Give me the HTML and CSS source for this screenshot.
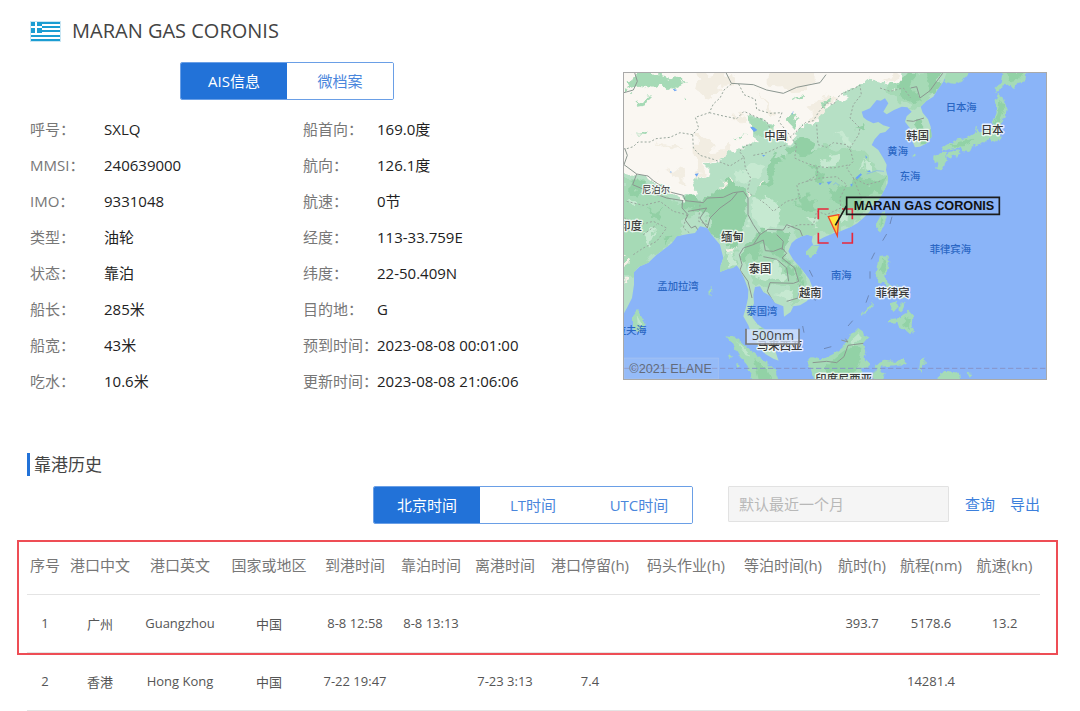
FILE: index.html
```html
<!DOCTYPE html>
<html lang="zh-CN">
<head>
<meta charset="utf-8">
<meta name="viewport" content="width=device-width, initial-scale=1">
<title>MARAN GAS CORONIS</title>
<link rel="stylesheet" href="styles.css">
</head>
<body>
<main class="page">
  <header class="ship">
    <svg class="flag" viewBox="0 0 31 21" aria-label="希腊" role="img">
      <rect width="31" height="21" fill="#c9e6f3"/>
      <rect x="1" y="1" width="29" height="19" fill="#fff"/>
      <path fill="#1b9dd2" d="M1 1h29v2H1zM12 5h18v2H12zM12 9h18v2H12zM1 14h29v2H1zM1 18h29v2H1z"/>
      <path fill="#1b9dd2" d="M1 1h11v11H1z"/>
      <path fill="#fff" d="M5 1h2v11H5zM1 5h11v2H1z"/>
    </svg>
    <h1 class="ship-name">MARAN GAS CORONIS</h1>
  </header>

  <section class="overview">
    <div class="info">
      <div class="tabs">
        <button class="tab tab-active" type="button">AIS信息</button>
        <button class="tab" type="button">微档案</button>
      </div>
      <div class="details">
        <dl class="fields">
          <dt>呼号：</dt><dd>SXLQ</dd>
          <dt>MMSI：</dt><dd>240639000</dd>
          <dt>IMO：</dt><dd>9331048</dd>
          <dt>类型：</dt><dd>油轮</dd>
          <dt>状态：</dt><dd>靠泊</dd>
          <dt>船长：</dt><dd>285米</dd>
          <dt>船宽：</dt><dd>43米</dd>
          <dt>吃水：</dt><dd>10.6米</dd>
        </dl>
        <dl class="fields">
          <dt>船首向：</dt><dd>169.0度</dd>
          <dt>航向：</dt><dd>126.1度</dd>
          <dt>航速：</dt><dd>0节</dd>
          <dt>经度：</dt><dd>113-33.759E</dd>
          <dt>纬度：</dt><dd>22-50.409N</dd>
          <dt>目的地：</dt><dd>G</dd>
          <dt>预到时间：</dt><dd>2023-08-08 00:01:00</dd>
          <dt>更新时间：</dt><dd>2023-08-08 21:06:06</dd>
        </dl>
      </div>
    </div>

    <svg class="map" viewBox="12 15 1266 918" role="img" aria-label="船舶位置">
      <defs>
        <clipPath id="land">
          <path d="M0 0H985L970 41L952 66L940 86L918 100L902 116L908 134L924 154L932 176L935 206L920 226L900 236L885 238L877 220L882 200L870 181L855 161L860 145L875 131L862 118L845 116L822 126L800 139L790 131L805 106L795 91L782 98L770 96L750 121L725 131L730 148L740 156L760 166L775 162L790 172L810 178L796 192L780 196L764 214L755 231L775 246L790 271L800 290L798 306L804 330L803 346L790 371L778 392L760 411L748 432L730 450L712 466L690 478L665 488L640 496L612 508L598 515L596 530L580 532L575 520L578 505L562 500L545 505L528 514L515 525L505 550L520 575L550 610L568 634L576 655L578 680L560 700L540 712L520 715L512 732L492 746L490 715L465 705L450 684L430 672L420 655L405 657L400 680L402 706L394 726L398 750L412 768L436 786L456 822L466 850L476 878L460 872L436 858L412 830L395 800L385 772L370 745L378 718L384 690L385 665L372 630L360 605L350 592L338 600L325 602L300 612L302 592L310 570L300 530L286 514L275 500L262 480L240 475L225 495L205 498L170 505L155 526L130 545L110 560L85 584L60 595L42 612L42 650L36 690L22 718L12 736H0Z"/>
        </clipPath>
        <filter id="terrain" x="0" y="0" width="1300" height="950" filterUnits="userSpaceOnUse">
          <feTurbulence type="fractalNoise" baseFrequency=".025" numOctaves="3" seed="4" result="noise"/>
          <feDisplacementMap in="SourceGraphic" in2="noise" scale="60" xChannelSelector="R" yChannelSelector="G"/>
        </filter>
        <filter id="coast" x="0" y="0" width="1300" height="950" filterUnits="userSpaceOnUse">
          <feTurbulence type="fractalNoise" baseFrequency=".06" numOctaves="2" seed="9" result="noise"/>
          <feDisplacementMap in="SourceGraphic" in2="noise" scale="16" xChannelSelector="R" yChannelSelector="G"/>
        </filter>
      </defs>
      <rect x="0" y="0" width="1300" height="950" fill="#8ab4f8"/>

      <!-- islands -->
      <g filter="url(#coast)">
      <g fill="#a5dbb7">
        <path d="M36 742L50 724L62 742L77 768L66 788L46 790L36 772Z"/>
        <path d="M558 548L574 532L598 534L590 556L574 568L558 560Z"/>
        <path d="M790 432L801 443L792 474L780 494L768 478L776 450Z"/>
        <path d="M975 0H1046V15L1030 34L1004 48L978 42L968 34Z"/>
        <path d="M1150 0H1220L1216 40L1196 44L1182 63L1158 47L1146 54L1138 72L1126 74L1124 62L1142 46Z"/>
        <path d="M1134 78L1146 84L1152 100L1160 122L1154 144L1142 166L1138 186L1142 206L1128 224L1116 222L1106 212L1090 226L1070 234L1058 230L1048 252L1030 250L1022 238L996 242L966 250L970 236L990 224L1012 214L1040 210L1062 196L1068 176L1082 190L1106 184L1122 160L1130 130L1124 100Z"/>
        <path d="M988 252L1012 244L1022 252L1010 266L996 260L990 272L980 264Z"/>
        <path d="M940 266L958 256L978 254L980 272L972 296L962 311L948 304L952 284L940 278Z"/>
        <path d="M776 564L800 562L808 582L802 606L796 624L798 640L822 660L812 664L790 646L774 640L766 616L772 592Z"/>
        <path d="M814 706L830 700L836 716L822 730L810 724ZM846 700L856 706L846 730L838 724ZM828 652L846 660L866 690L850 690Z"/>
        <path d="M800 768L818 752L838 750L858 738L866 728L880 744L878 776L882 790L870 798L856 786L838 780L832 762L816 764Z"/>
        <path d="M722 744L742 722L760 700L756 716L738 736Z"/>
        <path d="M268 664L275 656L273 678L269 684Z"/>
        <path d="M316 802L346 806L378 834L410 862L440 884L466 908L480 950H402L384 900L360 866L336 826Z"/>
        <path d="M562 880L580 868L604 876L640 858L672 832L690 804L714 780L728 790L732 802L748 808L730 828L736 850L730 870L752 890L728 902L722 950H590L572 912Z"/>
        <path d="M766 890L792 878L830 882L858 872L856 888L824 892L784 896L776 910L794 916L780 950H758Z"/>
        <path d="M900 880L910 868L918 882L906 896L906 918L898 904Z"/>
        <path d="M958 920L978 908L1016 914L1024 950H952ZM1040 914L1054 918L1046 926Z"/>
        <path d="M324 856L336 866L328 870ZM348 886L360 894L352 900ZM880 260L888 262L882 266Z"/>
      </g>
      <g fill="#92d2a6">
        <path d="M1138 92L1156 118L1144 150L1126 180L1096 196L1120 170L1134 134Z"/>
        <path d="M1160 15H1210L1196 34L1170 40Z"/>
        <path d="M985 232L1040 216L1064 212L1040 234L1000 236Z"/>
        <path d="M612 900L660 860L700 830L724 840L718 880L690 950H640Z"/>
        <path d="M400 870L440 900L460 950H420Z"/>
        <path d="M790 570L800 590L790 620L780 606ZM858 746L872 752L870 786L850 770ZM784 446L790 460L780 484Z"/>
      </g>
      <g fill="#bfe6cb">
        <path d="M50 740L66 770L54 776ZM350 818L396 866L380 862ZM690 820L716 796L722 810L700 838Z"/>
      </g>
      </g>

      <g clip-path="url(#land)">
        <rect x="0" y="0" width="1300" height="950" fill="#b6e0c5"/>
        <g filter="url(#terrain)">
        <!-- forest tones -->
        <g fill="#a6dab6">
          <path d="M500 260L560 230L640 250L700 236L740 280L790 300L800 360L740 440L640 500L540 500L500 470L420 440L400 380L440 330L470 290Z"/>
          <path d="M0 330L80 360L160 400L240 410L200 450L170 520L100 560L40 620L0 620Z"/>
          <path d="M380 560L440 530L500 560L560 640L570 700L520 720L500 650L440 670L400 650Z"/>
          <path d="M800 20L960 10L940 80L900 110L870 130L840 110L800 70Z"/>
          <path d="M300 560L330 520L350 580L330 610L300 612Z"/>
        </g>
        <g fill="#92d0a5">
          <path d="M180 396L250 398L290 362L310 336L360 352L378 372L380 440L372 500L340 540L310 510L270 500L262 440L200 420Z"/>
          <path d="M430 350L450 300L472 258L482 270L474 310L450 346Z"/>
          <path d="M440 485L500 490L510 530L490 560L530 610L552 650L520 620L480 570L420 540L380 590L360 570L390 520Z"/>
          <path d="M500 240L540 210L590 240L560 258L510 262Z"/>
          <path d="M620 370L690 350L720 330L750 340L790 330L780 370L730 390L700 430L650 410Z"/>
          <path d="M840 20L872 14L880 60L900 90L860 110L840 80ZM920 20L970 12L950 60L930 70Z"/>
          <path d="M890 160L920 180L930 210L915 224L900 190Z"/>
          <path d="M560 300L600 310L620 340L580 335ZM520 395L580 390L600 420L550 430ZM690 180L730 165L720 190Z"/>
          <path d="M20 345L70 360L60 376L24 372ZM70 420L130 430L110 446ZM130 500L160 490L140 526Z"/>
          <path d="M400 770L430 790L450 830L430 820Z"/>
        </g>
        <g fill="#c6e9d1">
          <path d="M392 400L440 380L480 420L470 470L430 490L395 460Z"/>
          <path d="M360 300L400 290L430 310L390 350L350 330Z"/>
          <path d="M600 270L660 262L650 290L610 296ZM640 200L700 210L680 230ZM720 290L760 286L750 310ZM650 440L700 440L670 462ZM560 450L600 450L590 474ZM410 590L470 575L500 630L450 640L420 630Z"/>
          <path d="M320 550L334 540L344 580L328 596ZM20 400L60 396L50 420ZM60 500L110 490L90 530ZM460 680L520 676L510 700Z"/>
        </g>
        <!-- plateau and steppe -->
        <path fill="#faf7f2" d="M-60 -60H850L846 34L820 62L790 40L762 32L740 52L700 62L676 80L640 108L606 112L590 135L596 158L560 178L542 176L532 198L510 222L496 210L476 222L462 200L452 168L420 150L384 128L380 158L392 182L404 214L380 232L352 246L318 242L300 256L302 284L266 292L264 316L240 332L226 366L204 396L170 378L120 352L66 332L40 322L18 314L-60 300Z"/>
        <g fill="#f2ede2">
          <path d="M220 20L330 12L338 44L300 66L250 100L240 50Z"/>
          <path d="M440 -20L600 -20L600 18L560 60L500 72L440 56Z"/>
          <path d="M220 180L270 240L340 236L290 280L260 290L240 340L230 280Z"/>
          <path d="M100 220L200 240L170 248ZM70 20L130 18L120 40L80 36ZM410 70L450 110L480 140L450 132ZM560 110L620 80L650 90L600 130L570 170ZM780 30L840 20L820 50Z"/>
          <path d="M120 300L190 320L210 350L160 330ZM330 130L372 150L360 170Z"/>
        </g>
        <g fill="#a6dab6">
          <path d="M44 22L140 18L200 44L160 66L130 52L100 60L60 50L20 62L14 40L40 36Z"/>
          <path d="M40 94L84 82L76 100L52 104ZM14 70L34 76L22 84ZM42 196L96 186L80 198ZM500 160L516 136L530 152L516 178ZM530 88L550 92L540 104ZM180 86L196 92L184 96ZM600 104L636 84L620 110ZM352 206L366 210L358 216Z"/>
          <path d="M378 132L420 156L450 172L440 200L404 196L388 170Z"/>
        </g>
        <g fill="#f4f0e6">
          <path d="M296 334L316 352L300 354ZM330 340L350 350L336 356ZM12 560L24 566L22 592L12 600ZM14 630L26 640L18 664ZM380 366L400 380L390 388ZM430 330L438 346L428 348ZM320 530L340 536L332 556Z"/>
        </g>
        </g>
        <!-- lakes -->
        <g fill="#69a3f5">
          <path d="M390 176L402 178L412 186L402 192ZM158 62L172 66L164 70ZM224 318L236 316L230 326ZM706 330L722 316L726 320L712 334ZM620 342L636 340L626 350ZM740 312L750 306L752 312ZM736 262L742 268L738 272ZM596 346L606 344L600 352ZM426 260L436 262L430 266ZM150 310L156 312L152 314ZM690 350L698 346L696 356Z"/>
        </g>
        <g fill="none" stroke="#7fb0f3" stroke-width="2">
          <path d="M740 318L770 308L792 310M640 350L648 344L656 352M516 140L520 130"/>
        </g>
        <!-- provincial borders -->
        <g class="province">
          <path d="M334 48L312 66L300 90L280 108L268 134L226 148L236 180L218 200L180 194L150 208L108 212L90 222L54 222L40 236L14 244"/>
          <path d="M268 134L310 144L350 152L372 130L402 144L440 160L452 186M218 200L220 240L240 262L280 274L330 294L372 268L358 250L378 232L400 230"/>
          <path d="M356 48L372 80L406 94L410 124L450 136L486 134L476 160L500 190L512 206L540 180L556 164L580 158L596 132L620 104"/>
          <path d="M372 268L376 300L392 330L382 370L398 384M400 262L440 254L480 236L500 230M510 206L530 230L524 270L550 282L590 296L594 320L560 340L530 350L540 390L500 400L460 430L440 410L420 396"/>
          <path d="M590 170L594 230L620 238L640 224L680 230L690 246M620 104L640 110L660 80L700 62L720 52L724 80L700 110L690 150L720 180L716 200L690 240L700 280L680 300L700 330L740 350L780 340"/>
          <path d="M560 340L600 330L650 326L680 350L660 390L662 420L620 440L590 430L580 470L540 470L500 480M700 330L720 380L740 420M594 296L640 300L690 290M780 60L810 70L850 60L872 90"/>
          <path d="M20 400L70 412L120 400L160 430L200 440L190 480L210 496M40 560L70 540L110 520L140 480L100 460L60 470L14 450M70 500L110 470M240 410L236 460L262 470"/>
        </g>
        <!-- national borders -->
        <g class="border">
          <path d="M318 14L334 46L400 50L440 66L490 76L530 58L600 44L618 20M12 74L40 66L52 40L44 14"/>
          <path d="M14 240L22 262L12 290L50 318L84 324L100 338L150 372L190 382L196 398L250 404L262 390L310 388L340 374L370 370L384 390L384 440L400 470L420 500L444 484L490 486L500 470L540 486L548 506"/>
          <path d="M50 318L38 350L90 372L140 390L190 398M188 396L186 420L204 440L196 456L214 480L226 474L240 496M204 430L260 420L240 450L262 480M262 480L270 450L300 420L334 396L352 374"/>
          <path d="M420 500L400 530L370 540L358 560L366 590L360 606L384 640L396 690M400 530L430 516L436 548L460 550L486 540L500 556L486 570L524 600L536 640L520 646L450 644L442 670L462 704"/>
          <path d="M430 566L470 574L500 600L506 640M470 500L490 520L486 546M500 700L534 690L540 650M860 158L880 160L912 150"/>
          <path d="M872 60L890 56L900 90L930 68L950 40L968 16"/>
        </g>
      </g>

      <g class="border"><path d="M578 884L620 880L650 884L672 866L684 832L730 826M664 816L684 822L676 812"/></g>
      <g class="sea-mark">
        <path d="M816 446L810 468M800 498L788 518M764 554L754 574M750 610V632M746 682L738 704M698 758L684 774M634 836L612 842M548 774L552 794M568 606L578 626M580 680L586 698"/>
      </g>
      <path class="equator" d="M12 901H1278"/>

      <g class="sea-name">
        <text x="977" y="130">日本海</text>
        <text x="802" y="260">黄海</text>
        <text x="839" y="337">东海</text>
        <text x="929" y="556">菲律宾海</text>
        <text x="633" y="632">南海</text>
        <text x="112" y="665">孟加拉湾</text>
        <text x="379" y="740">泰国湾</text>
        <text x="-13" y="797">拉夫海</text>
      </g>
      <g class="country">
        <text x="433" y="217">中国</text>
        <text x="859" y="217">韩国</text>
        <text x="1083" y="198">日本</text>
        <text x="-2" y="487">印度</text>
        <text x="303" y="518">缅甸</text>
        <text x="386" y="614">泰国</text>
        <text x="537" y="687">越南</text>
        <text x="767" y="686">菲律宾</text>
        <text x="411" y="847">马来西亚</text>
        <text x="586" y="944">印度尼西亚</text>
      </g>
      <text class="country-small" x="66" y="376">尼泊尔</text>

      <!-- distance scale -->
      <path fill="#d3e2fb" fill-opacity=".8" d="M377 784H537V828H377Z"/>
      <path fill="none" stroke="#777" stroke-width="5" d="M378 782V828H537V782"/>
      <text class="scale" x="395" y="816">500nm</text>
      <path fill="#fff" fill-opacity=".1" stroke="#c0cbe8" stroke-opacity=".5" stroke-width="2" d="M12 870H296V933H12Z"/>
      <text class="copyright" x="28" y="915">©2021 ELANE</text>

      <!-- selected ship -->
      <path fill="none" stroke="#e8283c" stroke-width="5" d="M595 454V423H626M666 423H697V454M697 494V525H666M626 525H595V494"/>
      <path fill="#ffe63b" d="M625 446L657 440L652 504Z"/>
      <path fill="#ffc43b" d="M640 478L654 470L651 500Z"/>
      <path fill="none" stroke="#f0472a" stroke-width="4" d="M625 446L657 440L652 504Z"/>
      <path fill="none" stroke="#1c1c1c" stroke-width="5" d="M646 472L680 412M680 388H1138V439H680Z"/>
      <text class="ship-tag" x="701" y="426">MARAN GAS CORONIS</text>
    </svg>
  </section>

  <section class="history">
    <h2 class="section-title">靠港历史</h2>
    <div class="controls">
      <div class="tabs">
        <button class="tab tab-active" type="button">北京时间</button>
        <button class="tab" type="button">LT时间</button>
        <button class="tab" type="button">UTC时间</button>
      </div>
      <input class="range" type="text" placeholder="默认最近一个月" aria-label="时间范围" disabled>
      <div class="actions">
        <a class="action" href="#query">查询</a>
        <a class="action" href="#export">导出</a>
      </div>
    </div>
    <div class="table-wrap">
      <table class="calls">
        <colgroup>
          <col class="c-no"><col class="c-zh"><col class="c-en"><col class="c-country"><col class="c-arrive"><col class="c-berth"><col class="c-leave"><col class="c-stay"><col class="c-dock"><col class="c-wait"><col class="c-hours"><col class="c-miles"><col class="c-speed">
        </colgroup>
        <thead>
          <tr><th>序号</th><th>港口中文</th><th>港口英文</th><th>国家或地区</th><th>到港时间</th><th>靠泊时间</th><th>离港时间</th><th>港口停留(h)</th><th>码头作业(h)</th><th>等泊时间(h)</th><th>航时(h)</th><th>航程(nm)</th><th>航速(kn)</th></tr>
        </thead>
        <tbody>
          <tr><td>1</td><td>广州</td><td>Guangzhou</td><td>中国</td><td>8-8 12:58</td><td>8-8 13:13</td><td></td><td></td><td></td><td></td><td>393.7</td><td>5178.6</td><td>13.2</td></tr>
          <tr><td>2</td><td>香港</td><td>Hong Kong</td><td>中国</td><td>7-22 19:47</td><td></td><td>7-23 3:13</td><td>7.4</td><td></td><td></td><td></td><td>14281.4</td><td></td></tr>
        </tbody>
      </table>
      <div class="highlight"></div>
    </div>
  </section>
</main>
</body>
</html>
```
FILE: styles.css
```css
* {
  box-sizing: border-box;
}

body {
  margin: 0;
  background: #fff;
  color: #333;
  font-family: "Open Sans", "Noto Sans CJK SC", sans-serif;
  font-size: 15px;
}

.page {
  padding: 18px 40px 0 27px;
}

.ship {
  display: flex;
  align-items: center;
  gap: 11px;
  height: 26px;
  padding-left: 3px;
}

.flag {
  width: 31px;
  height: 21px;
}

.ship-name {
  margin: 0;
  color: #444;
  font-size: 20px;
  font-weight: 400;
  line-height: 26px;
}

.overview {
  display: grid;
  grid-template-columns: 514fr 424fr;
  gap: 79px;
  align-items: start;
  margin: 18px -7px 0 3px;
}

.tabs {
  display: flex;
  width: max-content;
  height: 38px;
  border: 1px solid #6a9fe6;
  border-radius: 2px;
  overflow: hidden;
}

.info .tabs {
  margin: 0 auto;
}

.tab {
  width: 106px;
  padding: 0 0 2px;
  border: 0;
  background: #fff;
  color: #4a86dc;
  font: inherit;
}

.tab-active {
  background: #2272d8;
  color: #fff;
}

.details {
  display: grid;
  grid-template-columns: 273fr 241fr;
  margin-top: 11px;
}

.fields {
  display: grid;
  grid-template-columns: 74px 1fr;
  margin: 0;
  line-height: 36px;
  white-space: nowrap;
}

.fields dt {
  color: #777;
}

.fields dd {
  margin: 0;
  color: #222;
}

.map {
  display: block;
  width: 100%;
  margin-top: 10px;
  border: 1px solid #a9a9a9;
}

.province {
  fill: none;
  stroke: #98a69c;
  stroke-width: 3;
  stroke-dasharray: 6 6;
}

.border {
  fill: none;
  stroke: #8b9690;
  stroke-width: 3;
}

.sea-mark {
  fill: none;
  stroke: #6d88b8;
  stroke-width: 3;
}

.equator {
  stroke: #8795c8;
  stroke-width: 3;
  stroke-dasharray: 16 8;
}

.map text {
  font-family: "Liberation Sans", "Noto Sans CJK SC", sans-serif;
}

.sea-name {
  fill: #2b67c4;
  font-size: 31px;
  font-weight: 500;
}

.country,
.country-small {
  fill: #3a3a3a;
  stroke: #fff;
  stroke-opacity: .8;
  stroke-width: 8;
  stroke-linejoin: round;
  paint-order: stroke;
}

.country {
  font-size: 34px;
  font-weight: 500;
}

.country-small {
  font-size: 28px;
}

.map .scale {
  fill: #444;
  font-family: "Open Sans", sans-serif;
  font-size: 39px;
}

.copyright {
  fill: #626b7c;
  font-size: 38px;
}

.ship-tag {
  fill: #111;
  font-size: 38px;
  font-weight: 700;
}

.history {
  margin-top: 54px;
}

.section-title {
  margin: 0;
  padding-left: 4px;
  border-left: 3px solid #2272d8;
  color: #444;
  font-size: 17px;
  font-weight: 400;
  line-height: 23px;
}

.controls {
  display: flex;
  justify-content: flex-end;
  align-items: flex-start;
  margin-top: 10px;
}

.range {
  width: 221px;
  height: 36px;
  margin: 0 16px 0 35px;
  padding: 0 10px;
  border: 1px solid #e2e2e2;
  border-radius: 1px;
  background: #f5f5f5;
  font: inherit;
}

.range::placeholder {
  color: #b8b8b8;
  opacity: 1;
}

.actions {
  display: flex;
  gap: 15px;
  line-height: 36px;
}

.action {
  color: #3c7fdc;
  text-decoration: none;
}

.table-wrap {
  position: relative;
  margin-top: 12px;
}

.calls {
  width: 100%;
  table-layout: fixed;
  border-collapse: collapse;
  text-align: center;
  white-space: nowrap;
}

.calls th,
.calls td {
  height: 58px;
  padding: 0;
  border-bottom: 1px solid #e4e4e4;
}

.calls th {
  color: #777;
  font-size: 15px;
  font-weight: 400;
}

.calls td {
  color: #555;
  font-size: 13px;
}

.c-no { width: 36px; }
.c-zh { width: 74px; }
.c-en { width: 86px; }
.c-country { width: 92px; }
.c-arrive { width: 80px; }
.c-berth { width: 72px; }
.c-leave { width: 76px; }
.c-stay { width: 94px; }
.c-dock { width: 98px; }
.c-wait { width: 96px; }
.c-hours { width: 62px; }
.c-miles { width: 76px; }
.c-speed { width: 71px; }

/* frame around the header and the latest call */
.highlight {
  position: absolute;
  top: 4px;
  right: -18px;
  left: -10px;
  height: 115px;
  border: 2px solid #ee4d55;
  pointer-events: none;
}
```
